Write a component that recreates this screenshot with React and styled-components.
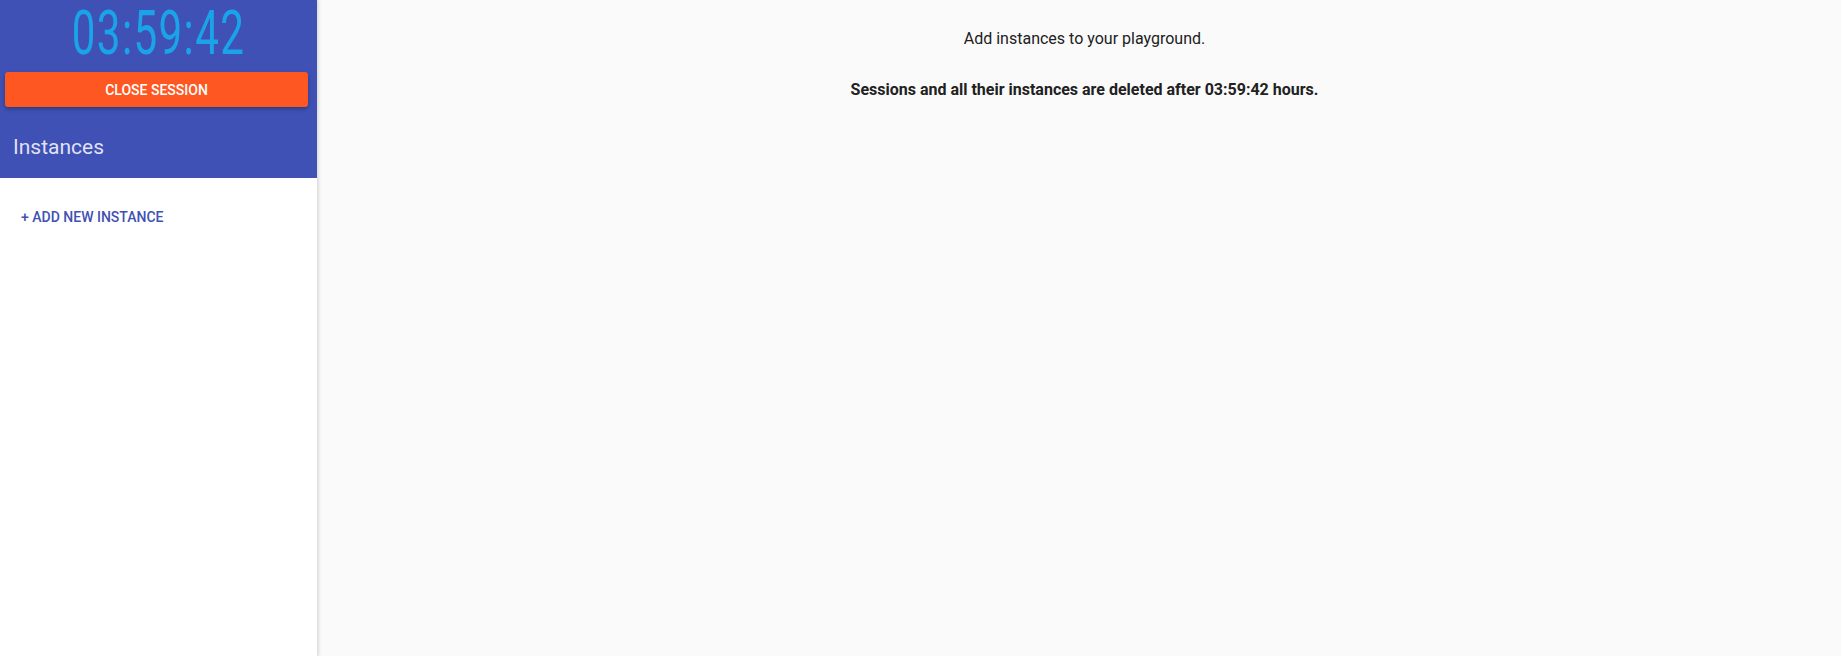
import React from "react";
import styled, { createGlobalStyle } from "styled-components";

const GlobalStyle = createGlobalStyle`
  html, body {
    margin: 0;
    padding: 0;
    height: 100%;
    background: #fafafa;
    font-family: Roboto, "Liberation Sans", sans-serif;
  }
  #root {
    height: 100%;
  }
`

const Layout = styled.div`
  display: flex;
  height: 656px;
  overflow: hidden;
`

const Sidebar = styled.aside`
  display: flex;
  flex-direction: column;
  width: 317px;
  flex-shrink: 0;
  background: #ffffff;
  border-right: 1px solid #e0e0e0;
  box-shadow: 1px 0 3px rgba(0, 0, 0, 0.12);
  z-index: 1;
`

const SidebarHeader = styled.div`
  display: flex;
  flex-direction: column;
  height: 178px;
  background: #3f51b5;
  box-sizing: border-box;
`

const Timer = styled.div`
  display: flex;
  justify-content: center;
  align-items: center;
  height: 66px;
`

const TimerDigits = styled.span`
  display: inline-block;
  font-family: Roboto, "Liberation Sans", sans-serif;
  font-weight: 400;
  font-size: 62px;
  line-height: 62px;
  letter-spacing: 2px;
  color: #1ba3ea;
  transform: scaleX(0.68);
`

const CloseButton = styled.button`
  margin: 6px 9px 0 5px;
  height: 35px;
  border: none;
  border-radius: 3px;
  background: #ff5722;
  color: #ffffff;
  font-family: Roboto, "Liberation Sans", sans-serif;
  font-weight: 500;
  font-size: 14px;
  text-transform: uppercase;
  box-shadow: 0 2px 4px rgba(0, 0, 0, 0.3);
  cursor: pointer;
`

const SidebarTitle = styled.h2`
  margin: 0;
  padding: 28px 13px 0;
  font-weight: 400;
  font-size: 21px;
  color: rgba(255, 255, 255, 0.85);
`

const AddButton = styled.button`
  align-self: flex-start;
  margin: 21px 0 0 13px;
  padding: 0 8px;
  height: 36px;
  border: none;
  background: transparent;
  color: #3f51b5;
  font-family: Roboto, "Liberation Sans", sans-serif;
  font-weight: 500;
  font-size: 14px;
  text-transform: uppercase;
  cursor: pointer;
`

const Main = styled.main`
  flex: 1;
  display: flex;
  flex-direction: column;
  align-items: center;
  padding: 28px 0 0 10px;
  background: #fafafa;
  color: #212121;
`

const Message = styled.p`
  margin: 0 0 ${props => props.gap || 0}px;
  font-size: 16px;
  line-height: 22px;
  font-weight: ${props => (props.bold ? 700 : 400)};
`

const App = () => {
  const remaining = "03:59:42";
  return (
    <>
      <GlobalStyle />
      <Layout>
        <Sidebar>
          <SidebarHeader>
            <Timer>
              <TimerDigits>{remaining}</TimerDigits>
            </Timer>
            <CloseButton>Close session</CloseButton>
            <SidebarTitle>Instances</SidebarTitle>
          </SidebarHeader>
          <AddButton>+ Add new instance</AddButton>
        </Sidebar>
        <Main>
          <Message gap={29}>Add instances to your playground.</Message>
          <Message bold>Sessions and all their instances are deleted after {remaining} hours.</Message>
        </Main>
      </Layout>
    </>
  );
};

export default App;
